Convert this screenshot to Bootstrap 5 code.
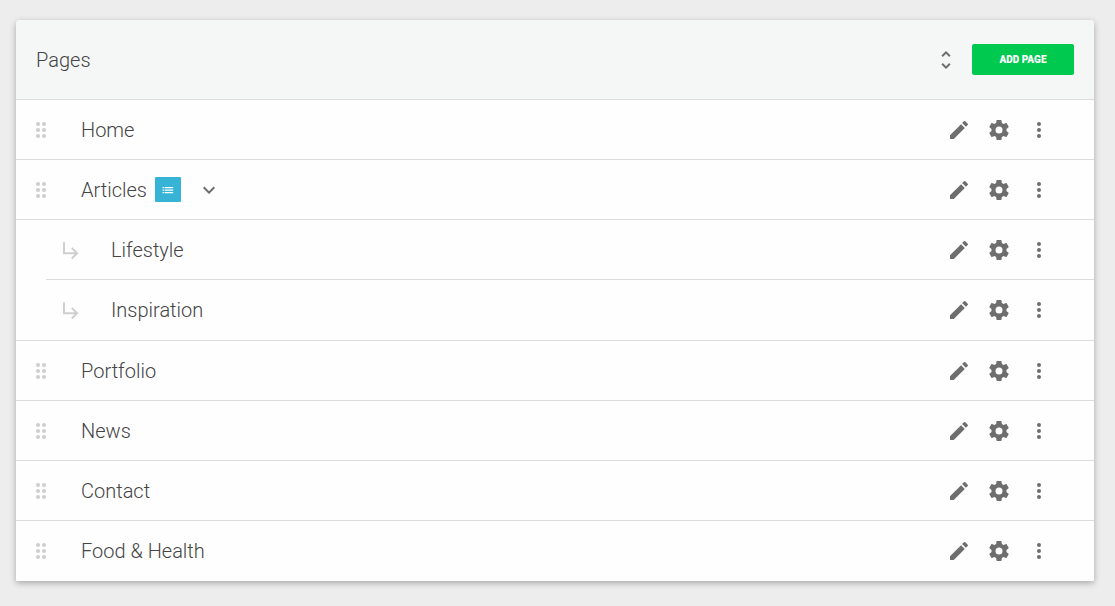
<!DOCTYPE html>
<html lang="en">
<head>
<meta charset="utf-8">
<meta name="viewport" content="width=device-width, initial-scale=1">
<title>Pages</title>
<link href="https://cdn.jsdelivr.net/npm/bootstrap@5.3.0/dist/css/bootstrap.min.css" rel="stylesheet">
<style>
  body { background: #ededed; color: #444; font-family: Roboto, sans-serif; font-size: 20px; font-weight: 300; line-height: 24px; padding: 20px 21px 25px 16px; }
  .panel { background: #fefefe; border-radius: 4px 4px 1px 1px; box-shadow: 0 2px 6px rgba(0,0,0,.3); overflow: hidden; }
  .panel-head { background: #f5f7f6; border-bottom: 1px solid #d5dcdc; height: 80px; padding: 0 20px; }
  .panel-title { font-size: 20px; font-weight: 300; line-height: 24px; }
  svg { display: block; fill: currentColor; }
  .icon-btn { background: none; border: 0; padding: 8px; color: #6e6e6e; }
  .unfold-btn { margin-right: 6px; }
  .add-btn { --bs-btn-bg: #00c94f; --bs-btn-hover-bg: #00b54b; --bs-btn-color: #fff; --bs-btn-hover-color: #fff; border: 0; border-radius: 2px; font-size: 10px; font-weight: 900; line-height: 15px; padding: 8px 0; width: 102px; }
  .page-row { height: 60px; border-bottom: 1px solid #dcdcdc; padding: 0 35px 0 13px; }
  .page-row a { color: inherit; text-decoration: none; }
  .handle { color: #cfcfcf; width: 52px; cursor: grab; }
  .sub-list { border-bottom: 1px solid #dcdcdc; padding-left: 30px; }
  .sub-list li:last-child .page-row { border-bottom-color: transparent; }
  .top-list > li:last-child .page-row { border-bottom: 0; }
  .type-tag { background: #36b3d5; color: #fff; width: 26px; height: 25px; border-radius: 1px; }
</style>
</head>
<body>
<svg width="0" height="0" class="position-absolute" aria-hidden="true">
  <symbol id="edit" viewBox="0 0 24 24"><path d="M3 17.25V21h3.75L17.81 9.94l-3.75-3.75L3 17.25zM20.71 7.04a1 1 0 0 0 0-1.41l-2.34-2.34a1 1 0 0 0-1.41 0l-1.83 1.83 3.75 3.75 1.83-1.83z"/></symbol>
  <symbol id="gear" viewBox="0 0 24 24"><path d="M12 15.5A3.5 3.5 0 0 1 8.5 12 3.5 3.5 0 0 1 12 8.5a3.5 3.5 0 0 1 3.5 3.5 3.5 3.5 0 0 1-3.5 3.5m7.43-2.53c.04-.32.07-.64.07-.97s-.03-.66-.07-1l2.11-1.63c.19-.15.24-.42.12-.64l-2-3.46c-.12-.22-.39-.31-.61-.22l-2.49 1c-.52-.39-1.06-.73-1.69-.98l-.37-2.65A.506.506 0 0 0 14 2h-4c-.25 0-.46.18-.5.42l-.37 2.65c-.63.25-1.17.59-1.69.98l-2.49-1c-.22-.09-.49 0-.61.22l-2 3.46c-.13.22-.07.49.12.64L4.57 11c-.04.34-.07.67-.07 1s.03.65.07.97l-2.11 1.66c-.19.15-.25.42-.12.64l2 3.46c.12.22.39.3.61.22l2.49-1.01c.52.4 1.06.74 1.69.99l.37 2.65c.04.24.25.42.5.42h4c.25 0 .46-.18.5-.42l.37-2.65c.63-.26 1.17-.59 1.69-.99l2.49 1.01c.22.08.49 0 .61-.22l2-3.46c.12-.22.07-.49-.12-.64z"/></symbol>
  <symbol id="more" viewBox="0 0 24 24"><circle cx="12" cy="6" r="2"/><circle cx="12" cy="12" r="2"/><circle cx="12" cy="18" r="2"/></symbol>
  <symbol id="drag" viewBox="0 0 24 24"><circle cx="9" cy="6" r="2.1"/><circle cx="15" cy="6" r="2.1"/><circle cx="9" cy="12" r="2.1"/><circle cx="15" cy="12" r="2.1"/><circle cx="9" cy="18" r="2.1"/><circle cx="15" cy="18" r="2.1"/></symbol>
  <symbol id="child" viewBox="0 0 24 24"><path d="M19.5 15.2l-6 6-1.42-1.42L15.67 16.2H4V4.2h2v10h9.67l-3.59-3.58L13.5 9.2l6 6z"/></symbol>
  <symbol id="unfold" viewBox="0 0 24 24"><path d="M12 5.83L15.17 9l1.41-1.41L12 3 7.41 7.59 8.83 9 12 5.83zm0 12.34L8.83 15l-1.41 1.41L12 21l4.59-4.59L15.17 15 12 18.17z"/></symbol>
  <symbol id="chevron" viewBox="0 0 24 24"><path d="M16.59 8.59L12 13.17 7.41 8.59 6 10l6 6 6-6z"/></symbol>
  <symbol id="list" viewBox="0 0 12 12"><path d="M.5 2.9h1.4v1.3H.5zM2.6 2.9h8.6v1.3H2.6zM.5 5.4h1.4v1.3H.5zM2.6 5.4h8.6v1.3H2.6zM.5 7.9h1.4v1.3H.5zM2.6 7.9h8.6v1.3H2.6z"/></symbol>
</svg>

<main class="panel">
  <header class="panel-head d-flex align-items-center">
    <h1 class="panel-title m-0 me-auto">Pages</h1>
    <button class="icon-btn unfold-btn" type="button" aria-label="Expand all"><svg width="24" height="24"><use href="#unfold"/></svg></button>
    <button class="btn add-btn" type="button">ADD PAGE</button>
  </header>
  <ul class="top-list list-unstyled m-0" id="pages"></ul>
</main>

<script src="https://cdn.jsdelivr.net/npm/bootstrap@5.3.0/dist/js/bootstrap.bundle.min.js"></script>
<script>
  const pages = [
    { name: 'Home' },
    { name: 'Articles', children: [{ name: 'Lifestyle' }, { name: 'Inspiration' }] },
    { name: 'Portfolio' },
    { name: 'News' },
    { name: 'Contact' },
    { name: 'Food &amp; Health' }
  ];
  const icon = (id, size = 24) => `<svg width="${size}" height="${size}" aria-hidden="true"><use href="#${id}"/></svg>`;
  const button = (id, label) => `<button class="icon-btn" type="button" aria-label="${label}">${icon(id)}</button>`;
  const item = (page, nested) => `<li>
    <div class="page-row d-flex align-items-center">
      <span class="handle">${icon(nested ? 'child' : 'drag')}</span>
      <a href="#">${page.name}</a>
      ${page.children ? `<span class="type-tag d-flex align-items-center justify-content-center ms-2">${icon('list', 12)}</span>
      <span class="ms-2">${button('chevron', 'Collapse')}</span>` : ''}
      <div class="d-flex ms-auto">${button('edit', 'Edit')}${button('gear', 'Settings')}${button('more', 'More')}</div>
    </div>
    ${page.children ? `<ul class="sub-list list-unstyled m-0">${page.children.map(c => item(c, true)).join('')}</ul>` : ''}
  </li>`;
  document.getElementById('pages').innerHTML = pages.map(p => item(p, false)).join('');
</script>
</body>
</html>
